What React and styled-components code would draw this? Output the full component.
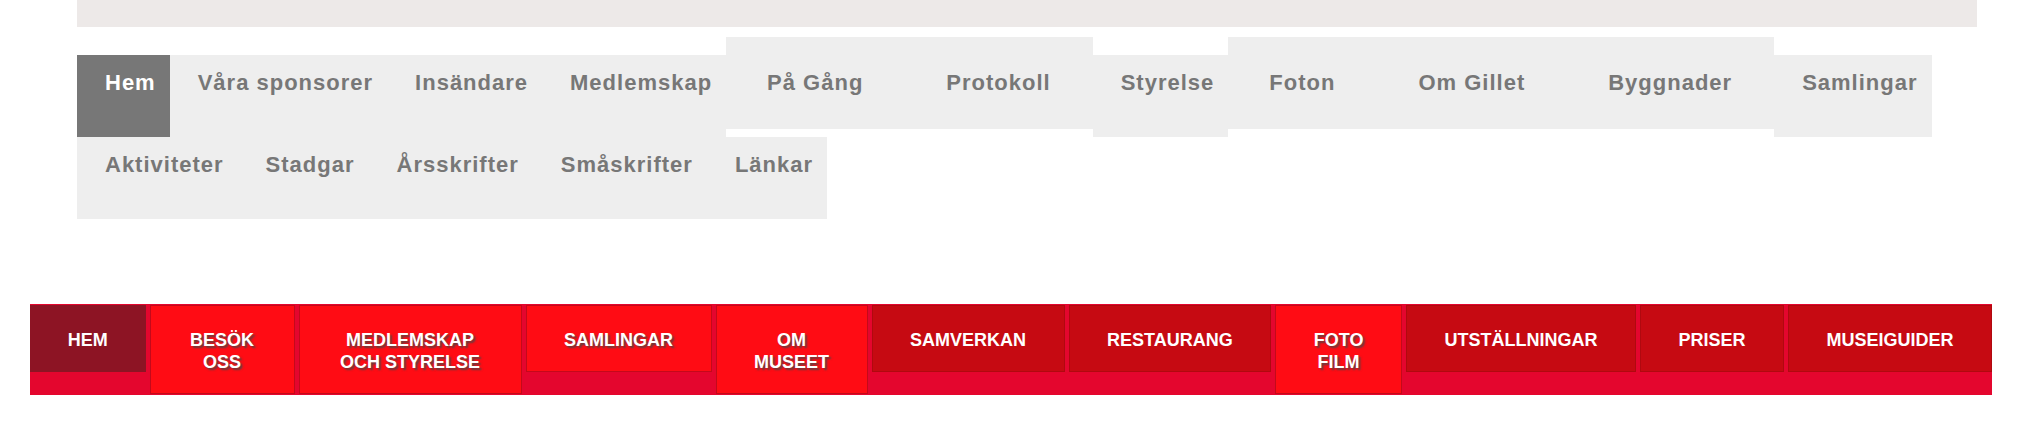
import React from "react";
import styled, { createGlobalStyle } from "styled-components";

const GlobalStyle = createGlobalStyle`
  body {
    margin: 0;
    background: #ffffff;
    font-family: "Liberation Sans", Arial, sans-serif;
  }
`;

const topMenu = [
  { label: "Hem", active: true },
  { label: "Våra sponsorer" },
  { label: "Insändare" },
  { label: "Medlemskap" },
  { label: "På Gång", raised: true },
  { label: "Protokoll", raised: true },
  { label: "Styrelse" },
  { label: "Foton", raised: true },
  { label: "Om Gillet", raised: true },
  { label: "Byggnader", raised: true },
  { label: "Samlingar" },
  { label: "Aktiviteter" },
  { label: "Stadgar" },
  { label: "Årsskrifter" },
  { label: "Småskrifter" },
  { label: "Länkar" },
];

const museumMenu = [
  { lines: ["HEM"], kind: "home", padX: 36.75 },
  { lines: ["BESÖK", "OSS"], kind: "bright", padX: 39.5 },
  { lines: ["MEDLEMSKAP", "OCH STYRELSE"], kind: "bright", padX: 40.5 },
  { lines: ["SAMLINGAR"], kind: "bright" },
  { lines: ["OM", "MUSEET"], kind: "bright" },
  { lines: ["SAMVERKAN"] },
  { lines: ["RESTAURANG"] },
  { lines: ["FOTO", "FILM"], kind: "bright" },
  { lines: ["UTSTÄLLNINGAR"] },
  { lines: ["PRISER"] },
  { lines: ["MUSEIGUIDER"] },
];

const App = () => {
  return (
    <>
      <GlobalStyle />
      <Header>
        <TopStrip />
        <Menu>
          {topMenu.map((item) => (
            <MenuItem
              key={item.label}
              $active={item.active}
              $raised={item.raised}
            >
              {item.label}
            </MenuItem>
          ))}
        </Menu>
      </Header>
      <NavWrap>
        <RedBar>
          {museumMenu.map((item) => (
            <RedItem
              key={item.lines.join(" ")}
              $kind={item.kind || "dark"}
              $padX={item.padX}
            >
              {item.lines.map((line, i) => (
                <React.Fragment key={line}>
                  {i > 0 && <br />}
                  {line}
                </React.Fragment>
              ))}
            </RedItem>
          ))}
        </RedBar>
      </NavWrap>
    </>
  );
};
export default App;

const Header = styled.header`
  padding-left: 77px;
  width: 1900px;
`;

const TopStrip = styled.div`
  height: 27px;
  background: #ede9e8;
`;

const Menu = styled.ul`
  list-style: none;
  margin: 28px 0 0;
  padding: 0;
  width: 1900px;
  display: flex;
  flex-wrap: wrap;
  align-items: flex-start;
`;

const MenuItem = styled.li`
  box-sizing: border-box;
  height: ${(p) => (p.$raised ? "91.5px" : "82px")};
  margin-top: ${(p) => (p.$raised ? "-18px" : "0")};
  padding: ${(p) => (p.$raised ? "33px 42px 0 41px" : "15px 14px 0 28px")};
  background: ${(p) => (p.$active ? "#777777" : "#eeeeee")};
  color: ${(p) => (p.$active ? "#ffffff" : "#777777")};
  font-size: 22px;
  line-height: 26px;
  font-weight: 700;
  letter-spacing: 1px;
  white-space: nowrap;
  cursor: pointer;
`;

const NavWrap = styled.nav`
  margin-top: 85px;
  padding-left: 30px;
`;

const RedBar = styled.div`
  display: flex;
  align-items: flex-start;
  gap: 4px;
  width: fit-content;
  padding: 1px 0 1px;
  background: #e4062e;
`;

const itemColors = {
  home: { bg: "#8d1424", border: "#8d1424" },
  bright: { bg: "#ff0c14", border: "#c4091a" },
  dark: { bg: "#c60a12", border: "#b0090f" },
};

const RedItem = styled.a`
  display: block;
  padding: 23px ${(p) => (p.$padX ? `${p.$padX}px` : "37.5px")} 20px;
  border: 1px solid ${(p) => itemColors[p.$kind].border};
  background: ${(p) => itemColors[p.$kind].bg};
  color: #ffffff;
  font-size: 18px;
  line-height: 22px;
  font-weight: 700;
  text-align: center;
  white-space: nowrap;
  text-shadow: ${(p) =>
    p.$kind === "bright" ? "2px 2px 2px rgba(70, 70, 70, 0.85)" : "none"};
  cursor: pointer;
`;
